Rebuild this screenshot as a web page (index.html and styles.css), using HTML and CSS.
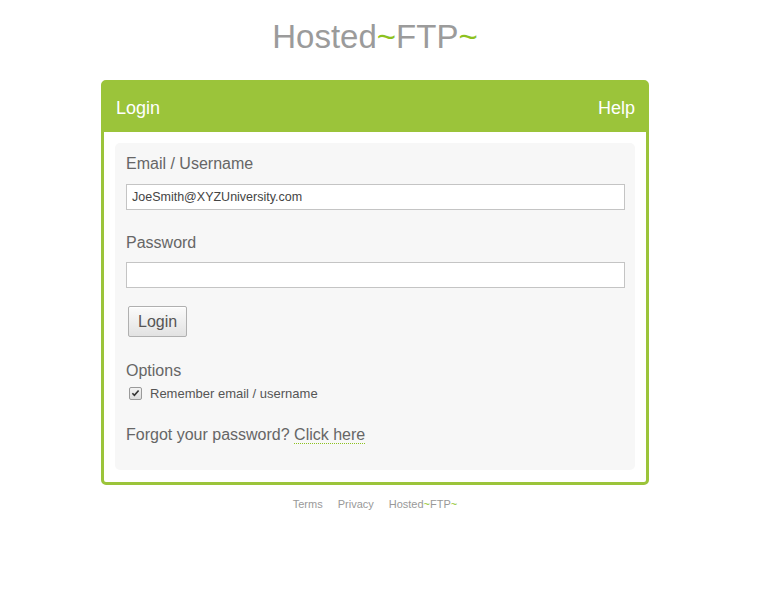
FILE: index.html
```html
<!DOCTYPE html>
<html>
<head>
<meta charset="utf-8">
<link rel="stylesheet" href="styles.css">
</head>
<body>
<div class="page">
  <h1 class="brand">Hosted<span class="tilde">~</span>FTP<span class="tilde">~</span></h1>
  <div class="card">
    <div class="card-head">
      <span class="head-title">Login</span>
      <span class="head-help">Help</span>
    </div>
    <div class="card-body">
      <div class="panel">
        <div class="label first">Email / Username</div>
        <div class="field">JoeSmith@XYZUniversity.com</div>
        <div class="label">Password</div>
        <div class="field"></div>
        <div class="btn-row"><span class="btn">Login</span></div>
        <div class="label options">Options</div>
        <div class="check-row">
          <span class="checkbox"><svg viewBox="0 0 12 12" width="12" height="12"><path d="M2.6 6.3 L4.8 8.6 L9.4 3.2" fill="none" stroke="#333" stroke-width="1.8"/></svg></span>
          <span class="check-text">Remember email / username</span>
        </div>
        <div class="forgot">Forgot your password? <span class="link">Click here</span></div>
      </div>
    </div>
  </div>
  <div class="footer">
    <span>Terms</span>
    <span>Privacy</span>
    <span>Hosted<span class="tilde">~</span>FTP<span class="tilde">~</span></span>
  </div>
</div>
</body>
</html>
```

FILE: styles.css
```css
html, body {
  margin: 0;
  padding: 0;
  background: #ffffff;
  font-family: "Liberation Sans", Arial, sans-serif;
}
.page {
  width: 750px;
  display: flex;
  flex-direction: column;
  align-items: center;
}
.brand {
  margin: 18px 0 24px;
  font-size: 33px;
  line-height: 38px;
  font-weight: normal;
  color: #9b9b9b;
}
.tilde {
  color: #8dc21f;
}
.card {
  width: 542px;
  border: 3px solid #9bc43a;
  border-radius: 5px;
  background: #fff;
}
.card-head {
  background: #9bc43a;
  height: 49px;
  display: flex;
  align-items: center;
  justify-content: space-between;
  padding: 0 11px 0 12px;
  color: #fff;
  font-size: 18px;
}
.head-title, .head-help {
  position: relative;
  top: 1px;
}
.card-body {
  padding: 11px 11px 12px;
}
.panel {
  background: #f7f7f7;
  border-radius: 5px;
  padding: 11px 10px 25px 11px;
}
.label {
  font-size: 16px;
  line-height: 20px;
  color: #666;
  margin: 23px 0 9px;
}
.label.first {
  margin-top: 0;
  margin-bottom: 10px;
}
.field {
  height: 24px;
  border: 1px solid #c4c4c4;
  background: #fff;
  font-size: 12.5px;
  line-height: 24px;
  padding: 0 5px;
  color: #444;
}
.btn-row {
  margin-top: 18px;
  padding-left: 2px;
  display: flex;
}
.btn {
  height: 29px;
  line-height: 29px;
  padding: 0 9px;
  font-size: 16px;
  color: #555;
  border: 1px solid #b0b0b0;
  border-radius: 2px;
  background: linear-gradient(#fbfbfb, #e2e2e2);
  box-shadow: inset 0 1px 0 #fff;
}
.label.options {
  margin: 24px 0 3px;
}
.check-row {
  display: flex;
  align-items: center;
  height: 18px;
  padding-left: 3px;
}
.checkbox {
  width: 11px;
  height: 11px;
  border: 1px solid #9a9a9a;
  border-radius: 2px;
  background: linear-gradient(#f3f3f3, #dcdcdc);
  display: flex;
  align-items: center;
  justify-content: center;
  margin-right: 8px;
}
.checkbox svg {
  display: block;
}
.check-text {
  font-size: 13px;
  color: #555;
}
.forgot {
  margin-top: 23px;
  font-size: 16px;
  line-height: 20px;
  color: #666;
}
.link {
  border-bottom: 1px dotted #8dc21f;
}
.footer {
  margin-top: 13px;
  display: flex;
  gap: 15px;
  font-size: 11px;
  color: #999;
}
```
